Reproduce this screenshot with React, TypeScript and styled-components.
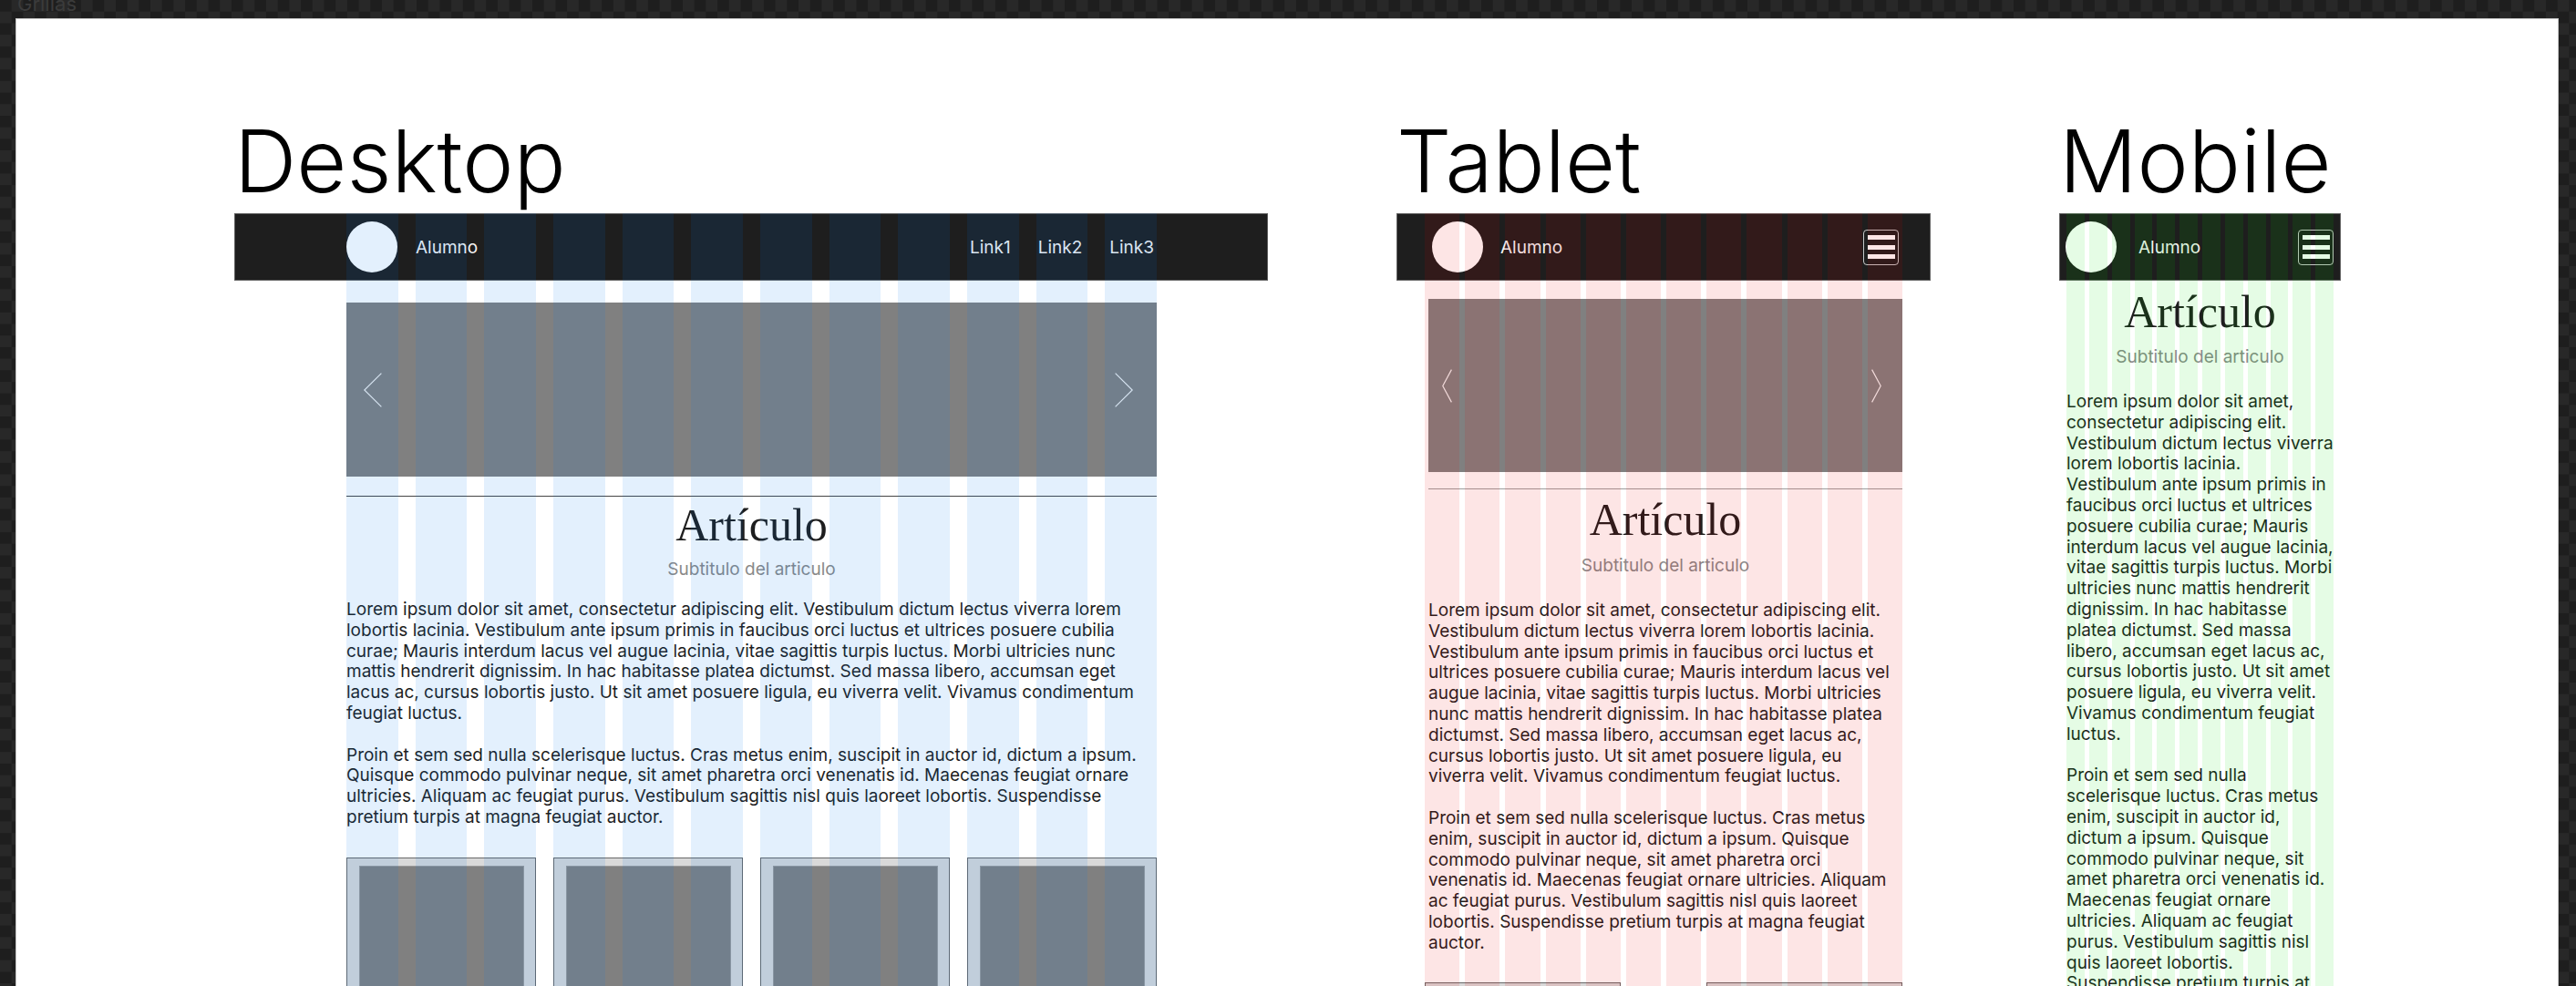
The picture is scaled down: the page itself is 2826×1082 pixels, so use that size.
import * as React from "react";
import styled, { createGlobalStyle } from "styled-components";

type CarouselSpec = {
  top: number;
  height: number;
  padLeft: number;
  padRight: number;
  arrowW: number;
  arrowH: number;
};

type DeviceSpec = {
  name: string;
  width: number;
  navPad: string;
  brandGap: number;
  gridLeft: number;
  gridRight: number;
  gutter: number;
  tint: string;
  pagePad: string;
  carousel?: CarouselSpec;
  divider?: { top: number; color: string };
  titleTop: number;
  subTop: number;
  bodyTop: number;
  cards?: { top: number; gap: number; spans: string[]; shift: number };
  links?: string[];
};

const LOREM_1 =
  "Lorem ipsum dolor sit amet, consectetur adipiscing elit. Vestibulum dictum lectus viverra lorem lobortis lacinia. Vestibulum ante ipsum primis in faucibus orci luctus et ultrices posuere cubilia curae; Mauris interdum lacus vel augue lacinia, vitae sagittis turpis luctus. Morbi ultricies nunc mattis hendrerit dignissim. In hac habitasse platea dictumst. Sed massa libero, accumsan eget lacus ac, cursus lobortis justo. Ut sit amet posuere ligula, eu viverra velit. Vivamus condimentum feugiat luctus.";
const LOREM_2 =
  "Proin et sem sed nulla scelerisque luctus. Cras metus enim, suscipit in auctor id, dictum a ipsum. Quisque commodo pulvinar neque, sit amet pharetra orci venenatis id. Maecenas feugiat ornare ultricies. Aliquam ac feugiat purus. Vestibulum sagittis nisl quis laoreet lobortis. Suspendisse pretium turpis at magna feugiat auctor.";

const devices: DeviceSpec[] = [
  {
    name: "Desktop",
    width: 1134,
    navPad: "0 125px 0 123px",
    brandGap: 20,
    gridLeft: 123,
    gridRight: 122,
    gutter: 19,
    tint: "rgba(0, 120, 240, 0.11)",
    pagePad: "0 122px 0 123px",
    carousel: { top: 24, height: 191, padLeft: 19, padRight: 26, arrowW: 20, arrowH: 38 },
    divider: { top: 21, color: "#454545" },
    titleTop: 3,
    subTop: 9,
    bodyTop: 22,
    cards: { top: 32, gap: 19, spans: ["span 3", "span 3", "span 3", "span 3"], shift: 0 },
    links: ["Link1", "Link2", "Link3"],
  },
  {
    name: "Tablet",
    width: 586,
    navPad: "0 35px 0 39px",
    brandGap: 19,
    gridLeft: 31,
    gridRight: 31,
    gutter: 6,
    tint: "rgba(235, 0, 0, 0.1)",
    pagePad: "0 31px 0 35px",
    carousel: { top: 20, height: 190, padLeft: 15, padRight: 23, arrowW: 11, arrowH: 37 },
    divider: { top: 18, color: "#9c9c9c" },
    titleTop: 5,
    subTop: 11,
    bodyTop: 27,
    cards: { top: 31, gap: 6, spans: ["1 / 6", "8 / 13"], shift: -4 },
  },
  {
    name: "Mobile",
    width: 309,
    navPad: "0 8px 0 7px",
    brandGap: 24,
    gridLeft: 8,
    gridRight: 8,
    gutter: 5,
    tint: "rgba(0, 225, 0, 0.1)",
    pagePad: "0 8px",
    titleTop: 6,
    subTop: 10,
    bodyTop: 27,
  },
];

function Chevron({ dir, w, h }: { dir: "left" | "right"; w: number; h: number }) {
  const points =
    dir === "left"
      ? `${w - 0.6},0.6 0.8,${h / 2} ${w - 0.6},${h - 0.6}`
      : `0.6,0.6 ${w - 0.8},${h / 2} 0.6,${h - 0.6}`;
  return (
    <svg width={w} height={h} viewBox={`0 0 ${w} ${h}`}>
      <polyline points={points} fill="none" stroke="#f2f2f2" strokeWidth={1.2} />
    </svg>
  );
}

function Device({ spec }: { spec: DeviceSpec }) {
  return (
    <DeviceCol $width={spec.width}>
      <DeviceTitle>{spec.name}</DeviceTitle>
      <Screen>
        <NavBar $pad={spec.navPad}>
          <Brand $gap={spec.brandGap}>
            <Avatar />
            <NavText>Alumno</NavText>
          </Brand>
          {spec.links ? (
            <NavLinks>
              {spec.links.map((l) => (
                <NavText key={l}>{l}</NavText>
              ))}
            </NavLinks>
          ) : (
            <MenuButton>
              <MenuBar />
              <MenuBar />
              <MenuBar />
            </MenuButton>
          )}
        </NavBar>

        <Page $pad={spec.pagePad}>
          {spec.carousel && (
            <Carousel
              $top={spec.carousel.top}
              $height={spec.carousel.height}
              $padLeft={spec.carousel.padLeft}
              $padRight={spec.carousel.padRight}
            >
              <Chevron dir="left" w={spec.carousel.arrowW} h={spec.carousel.arrowH} />
              <Chevron dir="right" w={spec.carousel.arrowW} h={spec.carousel.arrowH} />
            </Carousel>
          )}
          {spec.divider && <Divider $top={spec.divider.top} $color={spec.divider.color} />}
          <ArticleTitle $top={spec.titleTop}>Artículo</ArticleTitle>
          <ArticleSub $top={spec.subTop}>Subtitulo del articulo</ArticleSub>
          <ArticleBody $top={spec.bodyTop}>
            <p>{LOREM_1}</p>
            <p>{LOREM_2}</p>
          </ArticleBody>
          {spec.cards && (
            <CardGrid $top={spec.cards.top} $gap={spec.cards.gap} $shift={spec.cards.shift}>
              {spec.cards.spans.map((s, i) => (
                <Card key={i} $span={s}>
                  <CardImage />
                </Card>
              ))}
            </CardGrid>
          )}
        </Page>

        <GridOverlay $left={spec.gridLeft} $right={spec.gridRight} $gap={spec.gutter}>
          {Array.from({ length: 12 }).map((_, i) => (
            <OverlayCol key={i} $tint={spec.tint} />
          ))}
        </GridOverlay>
      </Screen>
    </DeviceCol>
  );
}

function App() {
  return (
    <>
      <GlobalStyle />
      <Canvas>
        <FrameLabel>Grillas</FrameLabel>
        <Board>
          {devices.map((d) => (
            <Device key={d.name} spec={d} />
          ))}
        </Board>
      </Canvas>
    </>
  );
}

const GlobalStyle = createGlobalStyle`
  html, body {
    margin: 0;
    padding: 0;
    overflow: hidden;
    background: #1e1e1e;
  }
  * {
    box-sizing: border-box;
  }
`;

const Canvas = styled.div`
  width: 2826px;
  height: 1082px;
  overflow: hidden;
  padding: 0 19px 0 17px;
  display: flex;
  flex-direction: column;
  background-color: #1e1e1e;
  background-image: conic-gradient(
    #282828 25%,
    transparent 0 50%,
    #282828 0 75%,
    transparent 0
  );
  background-size: 25.4px 25.4px;
`;

const FrameLabel = styled.div`
  height: 20px;
  flex-shrink: 0;
  padding-left: 2px;
  font: 400 22px/8px Inter, "Liberation Sans", sans-serif;
  color: #3b3b3b;
`;

const Board = styled.div`
  flex: 1;
  min-height: 0;
  overflow: hidden;
  background: #ffffff;
  border: 1px solid #c4c4c4;
  border-bottom: none;
  display: flex;
  align-items: flex-start;
  gap: 141px;
  padding: 99px 0 0 239px;
`;

const DeviceCol = styled.div<{ $width: number }>`
  width: ${(p) => p.$width}px;
  flex-shrink: 0;
  display: flex;
  flex-direction: column;
`;

const DeviceTitle = styled.div`
  font: 300 95px/114px Inter, "Liberation Sans", sans-serif;
  color: #000;
  white-space: nowrap;
`;

const Screen = styled.div`
  position: relative;
`;

const NavBar = styled.div<{ $pad: string }>`
  height: 74px;
  background: #1e1e1e;
  padding: ${(p) => p.$pad};
  display: flex;
  align-items: center;
  justify-content: space-between;
  outline: 1px solid rgba(150, 150, 150, 0.55);
  outline-offset: -1px;
`;

const Brand = styled.div<{ $gap: number }>`
  display: flex;
  align-items: center;
  gap: ${(p) => p.$gap}px;
`;

const Avatar = styled.div`
  width: 56px;
  height: 56px;
  border-radius: 50%;
  background: #ffffff;
`;

const NavText = styled.span`
  font: 400 19px/23px Inter, "Liberation Sans", sans-serif;
  color: #f4f4f4;
`;

const NavLinks = styled.div`
  display: flex;
  gap: 30px;
`;

const MenuButton = styled.div`
  width: 39px;
  height: 39px;
  border: 1px solid rgba(255, 255, 255, 0.75);
  border-radius: 4px;
  display: flex;
  flex-direction: column;
  align-items: center;
  justify-content: center;
  gap: 5.5px;
`;

const MenuBar = styled.span`
  width: 30px;
  height: 5px;
  background: #ffffff;
`;

const Page = styled.div<{ $pad: string }>`
  padding: ${(p) => p.$pad};
  display: flex;
  flex-direction: column;
`;

const Carousel = styled.div<{
  $top: number;
  $height: number;
  $padLeft: number;
  $padRight: number;
}>`
  margin-top: ${(p) => p.$top}px;
  height: ${(p) => p.$height}px;
  padding: 0 ${(p) => p.$padRight}px 0 ${(p) => p.$padLeft}px;
  background: #808080;
  display: flex;
  align-items: center;
  justify-content: space-between;
`;

const Divider = styled.div<{ $top: number; $color: string }>`
  margin-top: ${(p) => p.$top}px;
  height: 1px;
  background: ${(p) => p.$color};
`;

const ArticleTitle = styled.h1<{ $top: number }>`
  margin: ${(p) => p.$top}px 0 0;
  font: 400 50px/56px "Liberation Serif", "DejaVu Serif", serif;
  color: #1e1e1e;
  text-align: center;
`;

const ArticleSub = styled.div<{ $top: number }>`
  margin-top: ${(p) => p.$top}px;
  font: 400 19px/23px Inter, "Liberation Sans", sans-serif;
  color: #8a8a8a;
  text-align: center;
`;

const ArticleBody = styled.div<{ $top: number }>`
  margin-top: ${(p) => p.$top}px;
  font: 400 19px/22.8px Inter, "Liberation Sans", sans-serif;
  color: #1e1e1e;

  p {
    margin: 0;
  }

  p + p {
    margin-top: 22.8px;
  }
`;

const CardGrid = styled.div<{ $top: number; $gap: number; $shift: number }>`
  margin-top: ${(p) => p.$top}px;
  margin-left: ${(p) => p.$shift}px;
  display: grid;
  grid-template-columns: repeat(12, 1fr);
  column-gap: ${(p) => p.$gap}px;
`;

const Card = styled.div<{ $span: string }>`
  grid-column: ${(p) => p.$span};
  height: 230px;
  padding: 8px 12px 0 13px;
  background: #d9d9d9;
  border: 1px solid #686868;
`;

const CardImage = styled.div`
  height: 100%;
  background: #808080;
  border: 1px solid #9a9a9a;
`;

const GridOverlay = styled.div<{ $left: number; $right: number; $gap: number }>`
  position: absolute;
  top: 0;
  bottom: 0;
  left: ${(p) => p.$left}px;
  right: ${(p) => p.$right}px;
  display: grid;
  grid-template-columns: repeat(12, 1fr);
  column-gap: ${(p) => p.$gap}px;
  pointer-events: none;
`;

const OverlayCol = styled.div<{ $tint: string }>`
  background: ${(p) => p.$tint};
`;

export default App;
